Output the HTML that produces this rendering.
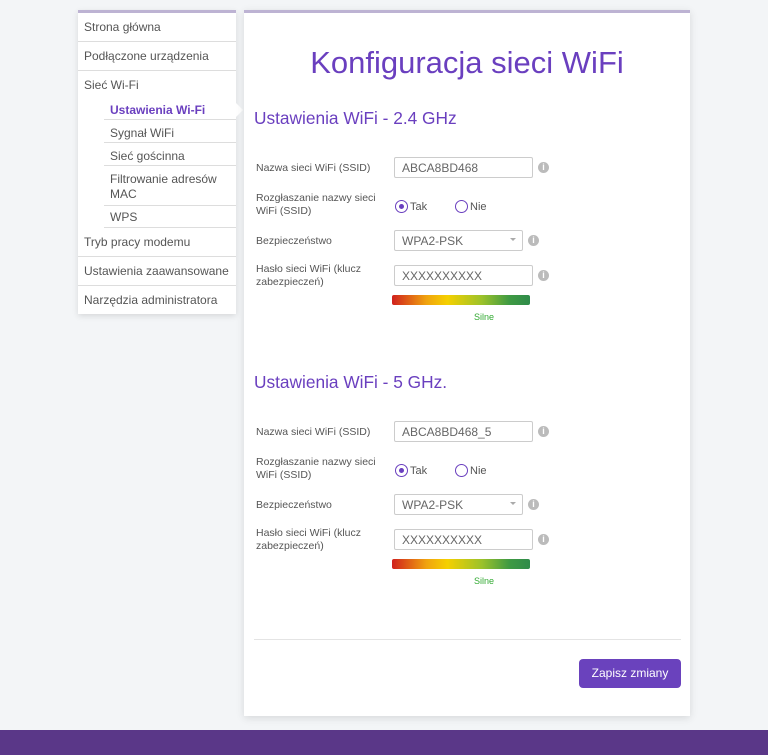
<!DOCTYPE html>
<html><head><meta charset="utf-8"><style>
*{margin:0;padding:0;box-sizing:border-box}
body{width:768px;height:755px;background:#f3f5f7;font-family:"Liberation Sans",sans-serif;position:relative;overflow:hidden;color:#555}
.a{position:absolute}
.side{left:78px;top:10px;width:158px;height:304px;background:#fff;border-top:3px solid #bdb3d3;box-shadow:0 2px 6px rgba(0,0,0,.12)}
.side div{position:absolute;font-size:12px;color:#555}
.hr{position:absolute;height:1px;background:#ddd}
.main{left:244px;top:10px;width:446px;height:706px;background:#fff;border-top:3px solid #bdb3d3;box-shadow:0 2px 8px rgba(0,0,0,.12)}
.lbl{position:absolute;font-size:10.5px;color:#555;line-height:13px}
.inp{position:absolute;height:21px;border:1px solid #ccc;border-radius:2px;font-size:12px;color:#666;padding:3px 7px}
.info{position:absolute;width:11px;height:11px;border-radius:50%;background:#bbb;color:#fff;font-size:9px;font-weight:bold;text-align:center;line-height:11px}
.radio{position:absolute;width:13px;height:13px;border:1.5px solid #6a3fbf;border-radius:50%}
.bar{position:absolute;width:138px;height:10px;border-radius:2px;background:linear-gradient(90deg,#d0211d,#f0a30f 25%,#f5d000 40%,#9cc22a 65%,#3f9a43 85%,#2f8b4a)}
h2{position:absolute;font-weight:normal;color:#6a3fbf;font-size:17.3px}
</style></head><body>
<div class="a side">
<div style="left:6px;top:7px">Strona główna</div>
<div class="hr" style="left:0;top:28px;width:158px"></div>
<div style="left:6px;top:36px">Podłączone urządzenia</div>
<div class="hr" style="left:0;top:57px;width:158px"></div>
<div style="left:6px;top:65px">Sieć Wi-Fi</div>
<div style="left:32px;top:90px;color:#6a3fbf;font-weight:bold">Ustawienia Wi-Fi</div>
<div class="hr" style="left:26px;top:106px;width:132px"></div>
<div style="left:32px;top:113px">Sygnał WiFi</div>
<div class="hr" style="left:26px;top:129px;width:132px"></div>
<div style="left:32px;top:136px">Sieć gościnna</div>
<div class="hr" style="left:26px;top:152px;width:132px"></div>
<div style="left:32px;top:159px;line-height:15px">Filtrowanie adresów<br>MAC</div>
<div class="hr" style="left:26px;top:192px;width:132px"></div>
<div style="left:32px;top:197px">WPS</div>
<div class="hr" style="left:26px;top:214px;width:132px"></div>
<div style="left:6px;top:222px">Tryb pracy modemu</div>
<div class="hr" style="left:0;top:243px;width:158px"></div>
<div style="left:6px;top:251px">Ustawienia zaawansowane</div>
<div class="hr" style="left:0;top:272px;width:158px"></div>
<div style="left:6px;top:280px">Narzędzia administratora</div>
</div>
<div class="a" style="left:236px;top:103px;width:0;height:0;border-top:7px solid transparent;border-bottom:7px solid transparent;border-left:7px solid #fff"></div>
<div class="a main"></div>
<div class="a" style="left:244px;top:45px;width:446px;text-align:center;font-size:31px;color:#6a3fbf">Konfiguracja sieci WiFi</div>

<h2 style="left:254px;top:108px">Ustawienia WiFi - 2.4 GHz</h2>
<div class="lbl" style="left:256px;top:162px">Nazwa sieci WiFi (SSID)</div>
<div class="inp" style="left:394px;top:157px;width:139px">ABCA8BD468</div>
<div class="info" style="left:538px;top:162px">i</div>
<div class="lbl" style="left:256px;top:192px">Rozgłaszanie nazwy sieci<br>WiFi (SSID)</div>
<div class="radio" style="left:395px;top:200px"><div style="position:absolute;left:2.5px;top:2.5px;width:5px;height:5px;border-radius:50%;background:#6a3fbf"></div></div>
<div class="lbl" style="left:410px;top:201px;font-size:11px">Tak</div>
<div class="radio" style="left:455px;top:200px"></div>
<div class="lbl" style="left:470px;top:201px;font-size:11px">Nie</div>
<div class="lbl" style="left:256px;top:235px">Bezpieczeństwo</div>
<div class="inp" style="left:394px;top:230px;width:129px">WPA2-PSK<span style="position:absolute;right:6px;top:7px;border-left:3px solid transparent;border-right:3px solid transparent;border-top:3px solid #aaa"></span></div>
<div class="info" style="left:528px;top:235px">i</div>
<div class="lbl" style="left:256px;top:263px">Hasło sieci WiFi (klucz<br>zabezpieczeń)</div>
<div class="inp" style="left:394px;top:265px;width:139px">XXXXXXXXXX</div>
<div class="info" style="left:538px;top:270px">i</div>
<div class="bar" style="left:392px;top:295px"></div>
<div class="lbl" style="left:474px;top:311px;font-size:9px;color:#3a3">Silne</div>

<h2 style="left:254px;top:372px">Ustawienia WiFi - 5 GHz.</h2>
<div class="lbl" style="left:256px;top:426px">Nazwa sieci WiFi (SSID)</div>
<div class="inp" style="left:394px;top:421px;width:139px">ABCA8BD468_5</div>
<div class="info" style="left:538px;top:426px">i</div>
<div class="lbl" style="left:256px;top:456px">Rozgłaszanie nazwy sieci<br>WiFi (SSID)</div>
<div class="radio" style="left:395px;top:464px"><div style="position:absolute;left:2.5px;top:2.5px;width:5px;height:5px;border-radius:50%;background:#6a3fbf"></div></div>
<div class="lbl" style="left:410px;top:465px;font-size:11px">Tak</div>
<div class="radio" style="left:455px;top:464px"></div>
<div class="lbl" style="left:470px;top:465px;font-size:11px">Nie</div>
<div class="lbl" style="left:256px;top:499px">Bezpieczeństwo</div>
<div class="inp" style="left:394px;top:494px;width:129px">WPA2-PSK<span style="position:absolute;right:6px;top:7px;border-left:3px solid transparent;border-right:3px solid transparent;border-top:3px solid #aaa"></span></div>
<div class="info" style="left:528px;top:499px">i</div>
<div class="lbl" style="left:256px;top:527px">Hasło sieci WiFi (klucz<br>zabezpieczeń)</div>
<div class="inp" style="left:394px;top:529px;width:139px">XXXXXXXXXX</div>
<div class="info" style="left:538px;top:534px">i</div>
<div class="bar" style="left:392px;top:559px"></div>
<div class="lbl" style="left:474px;top:575px;font-size:9px;color:#3a3">Silne</div>

<div class="a" style="left:254px;top:639px;width:427px;height:1px;background:#e4e4e4"></div>
<div class="a" style="left:579px;top:659px;width:102px;height:29px;background:#6a42bd;border-radius:4px;color:#fff;font-size:12px;text-align:center;line-height:29px">Zapisz zmiany</div>
<div class="a" style="left:0;top:730px;width:768px;height:25px;background:#5a3788"></div>
</body></html>
